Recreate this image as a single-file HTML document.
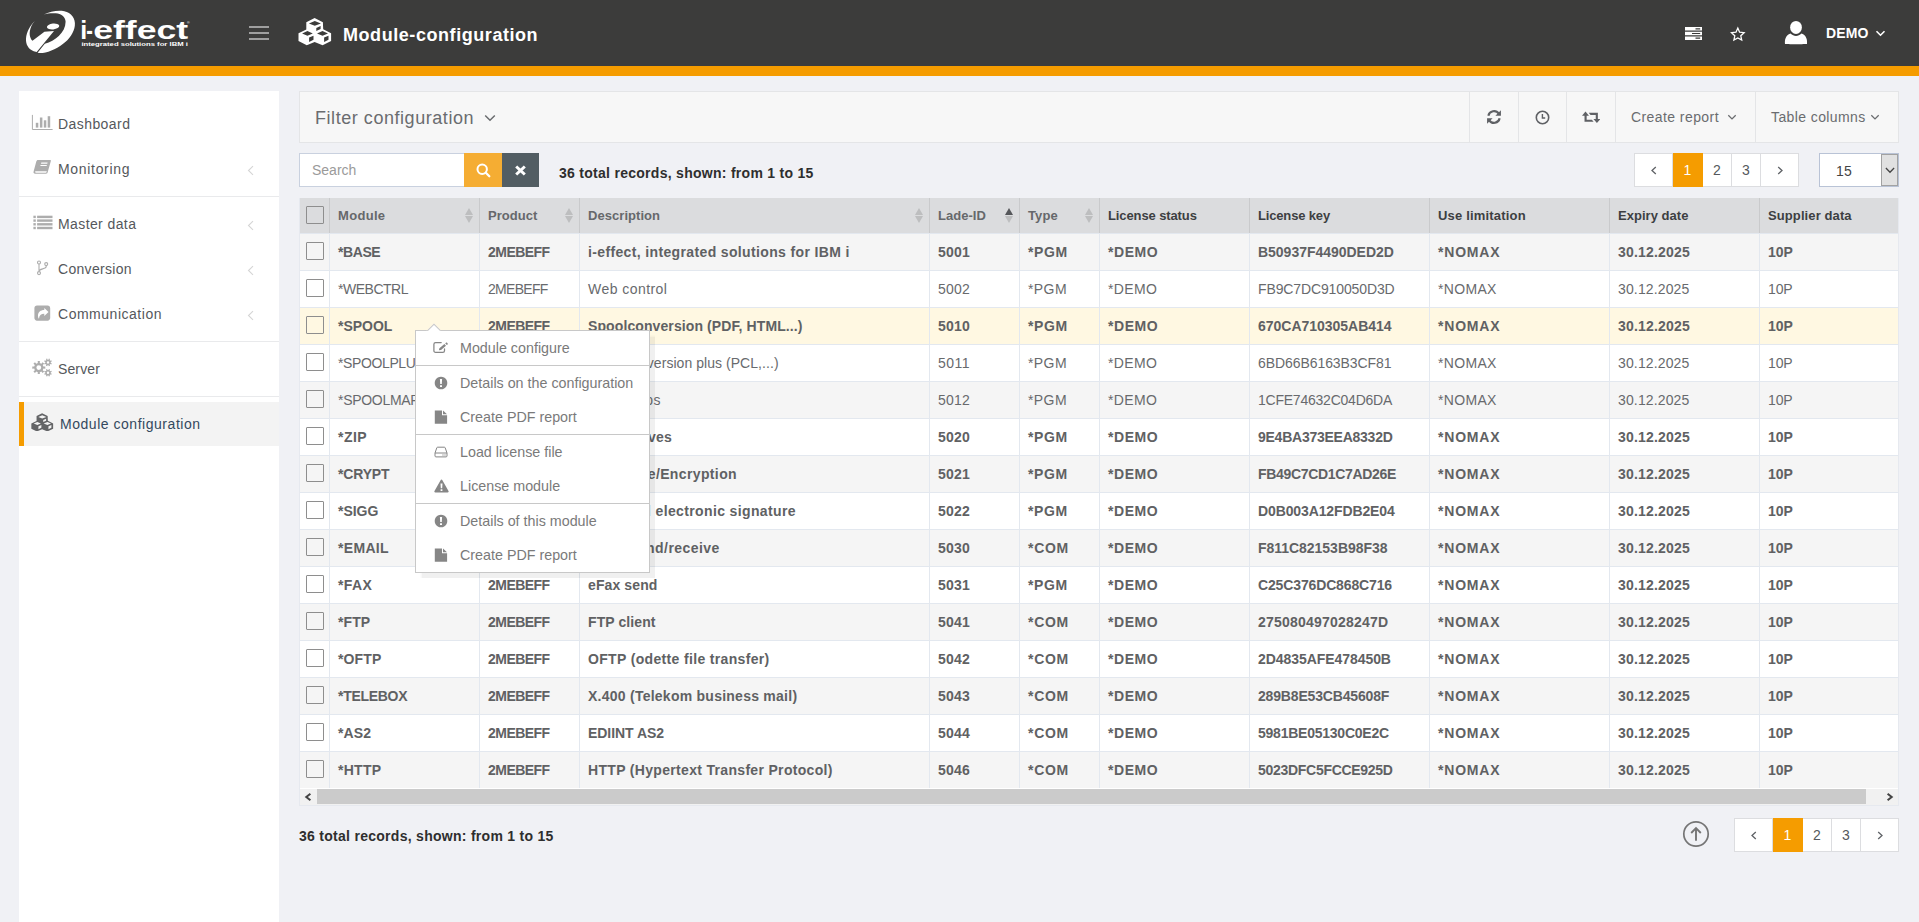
<!DOCTYPE html>
<html lang="en">
<head>
<meta charset="utf-8">
<title>Module-configuration</title>
<style>
*{box-sizing:border-box}
html,body{margin:0;padding:0}
body{width:1919px;height:922px;overflow:hidden;position:relative;background:#f0f1f5;font-family:"Liberation Sans",Arial,sans-serif;font-size:14px;color:#55585c}
.os{white-space:nowrap;display:inline-block}
#hdr{position:absolute;left:0;top:0;width:1919px;height:66px;background:#3c3c3b}
#bar{position:absolute;left:0;top:66px;width:1919px;height:10px;background:#f59c00}
#logo{position:absolute;left:0;top:0}
#title{position:absolute;left:343px;top:23px;font-size:18px;line-height:24px;font-weight:700;color:#fff}
#user{position:absolute;left:1826px;top:23px;font-size:14px;line-height:20px;font-weight:700;color:#fff}
#side{position:absolute;left:19px;top:91px;width:260px;height:831px;background:#fff;padding-top:10px}
#side .it{position:relative;height:45px;line-height:45px;font-size:14px;color:#55585c}
#side .it .lb{position:absolute;left:39px;top:1px}
#side .it svg.ic{position:absolute}
#side .it svg.ch{position:absolute;left:228px;top:19px}
#side .sep{height:1px;background:#e9eaec;margin:5px 0 4px 0}
#side .it.act{background:#f3f3f3;border-left:5px solid #f59c00;color:#34495e;top:1px;height:44px}
#side .it.act .lb{left:36px;top:0}
#filt{position:absolute;left:299px;top:91px;width:1600px;height:52px;background:#f7f7f7;border:1px solid #e4e5e7}
#filt .ft{position:absolute;left:15px;top:13px;font-size:18px;line-height:26px;color:#6a6c6f}
#filt .fch{position:absolute;left:184.3px;top:22px}
#filt .tb{position:absolute;top:0;height:50px;border-left:1px solid #e4e5e7;color:#6a6c6f;font-size:14px;line-height:50px}
#filt .tb .tl{position:absolute;top:0}
#filt .tb .tch{position:absolute;top:22.3px}
#srch{position:absolute;left:299px;top:153px;width:166px;height:34px;background:#fff;border:1px solid #c9d1df;font-size:14px;line-height:32px;padding-left:12px;color:#9a9a9a}
#sb1{position:absolute;left:464px;top:153px;width:38px;height:34px;background:#f5ad33}
#sb2{position:absolute;left:502px;top:153px;width:37px;height:34px;background:#525d63}
#rec1{position:absolute;left:559px;top:163px;font-size:14px;line-height:20px;color:#2e2e2e;font-weight:700}
#rec2{position:absolute;left:299px;top:826px;font-size:14px;line-height:20px;color:#2e2e2e;font-weight:700}
.pg{position:absolute;height:34px;display:flex;border:1px solid #dcdde0;background:#fff}
.pg .p{height:32px;line-height:32px;text-align:center;font-size:14px;color:#55585c;border-right:1px solid #dcdde0;display:flex;align-items:center;justify-content:center}
.pg .p:last-child{border-right:0}
.pg .p.on{background:#f59c00;color:#fff;margin:-1px 0;height:34px;border-right-color:#f59c00}
#sel{position:absolute;left:1819px;top:153px;width:80px;height:34px;background:#fff;border:1px solid #b9c3d6;font-size:14px;line-height:34px;color:#444;padding-left:16px}
#sel .arr{position:absolute;right:0;top:0;width:17px;height:32px;background:#e1e1e1;border:1px solid #a2a2a2;display:flex;align-items:center;justify-content:center}
#tw{position:absolute;left:299px;top:198px;width:1600px;height:591px;overflow:hidden;background:#fff;border-left:1px solid #e6e9ef;border-right:1px solid #e6e9ef}
#tbl{border-collapse:separate;border-spacing:0;table-layout:fixed;width:1610px;font-size:14px}
#tbl th{height:35px;background:#dbdcde;text-align:left;font-weight:700;padding:0 0 0 8px;border-right:1px solid #c9cacc;position:relative;color:#3d3f42;font-size:13px}
#tbl th.so{color:#66686b}
#tbl td{height:37px;padding:0 0 0 8px;border-right:1px solid #e3e8ef;border-top:1px solid #e3e8ef;color:#686a6d;background:#fff}
#tbl tr.b td{font-weight:700;color:#606163}
#tbl tr.odd td{background:#f5f5f5}
#tbl tr.hl td{background:#fff8e2}
#tbl .ck{padding:0}
#tbl .ck i{display:block;width:18px;height:18px;border:1px solid #8e8e8e;background:#fff;margin-left:6px;border-radius:1px;position:relative;top:-1px}
#tbl tr.odd .ck i{background:#f5f5f5}
#tbl tr.hl .ck i{background:#fff8e2}
#tbl th.ck i{background:#dbdcde}
#tbl .si{position:absolute;right:6px;top:10px;width:8px;height:16px}
#tbl .si:before{content:"";position:absolute;left:0;top:0;border:4px solid transparent;border-top-width:0;border-bottom:7px solid #bdbebf}
#tbl .si:after{content:"";position:absolute;left:0;top:8px;border:4px solid transparent;border-bottom-width:0;border-top:7px solid #bdbebf}
#tbl .si.up:before{border-bottom-color:#55575a}
#hs{position:absolute;left:299px;top:789px;width:1600px;height:17px;background:#f1f1f1;border:1px solid #e6e9ef;border-top:0}
#hs .th{position:absolute;left:17px;top:0;width:1549px;height:15px;background:#cbcbcb}
#upc{position:absolute;left:1681.3px;top:819.2px}
#cm{position:absolute;left:415px;top:330px;width:235px;background:#fff;border:1px solid #c8c8c8;box-shadow:4.5px 4.5px 1px rgba(0,0,0,.06);font-family:"Liberation Sans",Arial,sans-serif;font-size:14.3px;color:#7a7a7a}
#cm .mi{height:34px;line-height:34px;position:relative}
#cm .mi span{position:absolute;left:44px;top:0;white-space:nowrap}
#cm .mi svg{position:absolute;left:17px;top:10px}
#cm .ms{height:1px;background:#c8c8c8}
#cm .ar{position:absolute;left:10px;top:-8px;width:15px;height:8px;overflow:hidden}
#cm .ar:before{content:"";position:absolute;left:2px;top:3px;width:10px;height:10px;background:#fff;border:1px solid #c8c8c8;transform:rotate(45deg)}
</style>
</head>
<body>
<div id="hdr">
<svg id="logo" width="1919" height="66" viewBox="0 0 1919 66">
<g fill="#fff">
<path d="M43.9,14.5 C49,11.5 56,10.3 61.7,10.7 C69,11.3 74.5,16 74.9,22.9 C75.3,30 71,37 65.3,42 C59,47.5 50,52 42.7,53 C40.5,53.2 39,53 37.6,52.7 L44.8,43.8 C50,42.5 55,39.5 58.8,36 C63,32 65.5,27 65.6,21.7 C65.6,17 61,13.5 55.8,13.3 C51,13 47,13.5 43.9,14.5 Z"/>
<path d="M34.9,21.1 C30.5,25 26.5,32 26,38.4 C25.6,44.5 28.5,49 33.7,51.2 L36.7,52.1 L54,30.9 L44.4,31.8 L32.5,40.8 C29.5,38 29,33 30.5,28.5 C31.5,25.5 33,23 34.9,21.1 Z"/>
<ellipse cx="53.1" cy="26.5" rx="6.2" ry="2.9" transform="rotate(-6 53.1 26.5)"/>
<text y="38.8" font-family="Liberation Sans, Arial, sans-serif" font-weight="700" font-size="25"><tspan x="80.2">i</tspan><tspan x="86.3" textLength="6.6" lengthAdjust="spacingAndGlyphs">-</tspan><tspan x="93.2" textLength="95" lengthAdjust="spacingAndGlyphs">effect</tspan></text>
<text x="81.4" y="46" font-family="Liberation Sans, Arial, sans-serif" font-weight="700" font-size="5.6" textLength="106.5" lengthAdjust="spacingAndGlyphs">integrated solutions for IBM i</text>
<text x="187" y="23.5" font-family="Liberation Sans, Arial, sans-serif" font-size="3.5">®</text>
</g>
<path fill="#fff" fill-rule="evenodd" d="M314.6,18.1 L322.9,22.2 L323.2,29.3 L331.1,33.3 L331.1,41 L322.6,45.2 L314.6,42 L306.8,45.2 L298.5,41.1 L298.5,33.3 L306.3,29.4 L306.3,22.2 Z M314.8,20.9 L320.9,23.4 L314.8,25.8 L308.9,23.4 Z M316.3,28.1 L320.6,26.1 L320.6,29.1 L316.3,30.9 Z M307.4,31.1 L312.8,33.4 L307.4,35.7 L302.1,33.4 Z M309.1,37.6 L313.5,35.7 L313.5,39.8 L309.1,41.9 Z M322.5,31.1 L328,33.4 L322.5,35.7 L317,33.4 Z M324.1,37.6 L328.5,35.7 L328.5,39.8 L324.1,41.9 Z"/>
<g fill="#fff"><path fill-rule="evenodd" d="M1685,27 h17 v3.6 h-17 Z M1695.5,28.2 v1.2 h4.7 v-1.2 Z"/><path fill-rule="evenodd" d="M1685,31.7 h17 v3.6 h-17 Z M1692,32.9 v1.2 h8.2 v-1.2 Z"/><path fill-rule="evenodd" d="M1685,36.4 h17 v3.6 h-17 Z M1695.5,37.6 v1.2 h4.7 v-1.2 Z"/></g>
<path d="M1737.8,28.1 L1739.6,32.2 L1744.1,32.7 L1740.8,35.8 L1741.7,40.1 L1737.8,38.0 L1733.9,40.1 L1734.8,35.8 L1731.5,32.7 L1736.0,32.2 Z" fill="none" stroke="#fff" stroke-width="1.3" stroke-linejoin="miter"/>
<g fill="#fff"><ellipse cx="1796" cy="27.4" rx="5.9" ry="6.5"/><path d="M1785,44 C1784.6,40 1785.5,35.5 1790.5,33.6 C1792.2,35.2 1794,35.9 1796,35.9 C1798,35.9 1799.8,35.2 1801.5,33.6 C1806.5,35.5 1807.4,40 1807,44 C1806.6,44.2 1785.4,44.2 1785,44 Z"/></g>
<path d="M1876.5,31.2 L1880.5,35.2 L1884.5,31.2" fill="none" stroke="#fff" stroke-width="1.6"/>
<g fill="#b9b9b8"><rect x="249" y="26.2" width="20" height="1.6"/><rect x="249" y="32.2" width="20" height="1.6"/><rect x="249" y="38.2" width="20" height="1.6"/></g>
</svg>
<div id="title"><span class="os b" style="letter-spacing:0.56px">Module-configuration</span></div>
<div id="user"><span class="os b" style="letter-spacing:0.14px">DEMO</span></div>
</div>
<div id="bar"></div>

<div id="side">
<div class="it"><svg class="ic" style="left:12px;top:13px" width="22" height="17" viewBox="31 114 22 17"><path d="M32.4,114.9 V129.5 H52.6" fill="none" stroke="#adadad" stroke-width="1"/><g fill="#adadad"><rect x="35.8" y="122.8" width="2.5" height="4.8"/><rect x="39.9" y="117.5" width="2.5" height="10.1"/><rect x="43.8" y="120.3" width="2.5" height="7.3"/><rect x="47.7" y="116.2" width="2.5" height="11.4"/></g></svg><span class="lb os" style="letter-spacing:0.43px">Dashboard</span></div>
<div class="it"><svg class="ic" style="left:14px;top:13px" width="19" height="16" viewBox="33 159 19 16"><path fill="#adadad" fill-rule="evenodd" d="M37.9,160 H50 C50.8,160 51,160.5 50.8,161.2 L47.6,172.6 C47.4,173.4 46.8,173.8 46,173.8 H35.2 C33.8,173.8 33.2,172.9 33.6,171.6 L36.3,161.6 C36.6,160.6 37.1,160 37.9,160 Z M41.3,162.6 L41,163.7 H47.3 L47.6,162.6 Z M40.6,165 L40.3,166.1 H46.6 L46.9,165 Z M35.3,171.3 C34.9,172.3 35.2,172.7 36,172.7 H45.7 C46.2,172.7 46.5,172.4 46.6,171.9 L46.8,171.3 Z"/></svg><span class="lb os" style="letter-spacing:0.68px">Monitoring</span><svg class="ch" width="8" height="11" viewBox="0 0 8 11"><path d="M6 1.2 L1.5 5.5 L6 9.8" fill="none" stroke="#d5d5d5" stroke-width="1.1"/></svg></div>
<div class="sep"></div>
<div class="it"><svg class="ic" style="left:13.5px;top:13.5px" width="20" height="16" viewBox="32.5 214.5 20 16"><g fill="#adadad"><rect x="32.9" y="215.2" width="2.4" height="2.4"/><rect x="36.6" y="215.2" width="15.4" height="2.4"/><rect x="32.9" y="218.9" width="2.4" height="2.4"/><rect x="36.6" y="218.9" width="15.4" height="2.4"/><rect x="32.9" y="222.6" width="2.4" height="2.4"/><rect x="36.6" y="222.6" width="15.4" height="2.4"/><rect x="32.9" y="226.3" width="2.4" height="2.4"/><rect x="36.6" y="226.3" width="15.4" height="2.4"/></g></svg><span class="lb os" style="letter-spacing:0.40px">Master data</span><svg class="ch" width="8" height="11" viewBox="0 0 8 11"><path d="M6 1.2 L1.5 5.5 L6 9.8" fill="none" stroke="#d5d5d5" stroke-width="1.1"/></svg></div>
<div class="it"><svg class="ic" style="left:17px;top:13.5px" width="13" height="17" viewBox="36 259.5 13 17"><g fill="none" stroke="#adadad" stroke-width="1.1"><circle cx="39" cy="262" r="1.5"/><circle cx="39" cy="272.6" r="1.5"/><circle cx="46.2" cy="263.6" r="1.5"/><path d="M39,263.5 V271.1 M46.2,265.1 V266 C46.2,269 39,267.8 39,271"/></g></svg><span class="lb os" style="letter-spacing:0.30px">Conversion</span><svg class="ch" width="8" height="11" viewBox="0 0 8 11"><path d="M6 1.2 L1.5 5.5 L6 9.8" fill="none" stroke="#d5d5d5" stroke-width="1.1"/></svg></div>
<div class="it"><svg class="ic" style="left:15px;top:13.5px" width="17" height="16" viewBox="34 304.5 17 16"><path fill="#adadad" fill-rule="evenodd" d="M37,305.1 H47.6 C49.1,305.1 50.2,306.2 50.2,307.7 V317.6 C50.2,319.1 49.1,320.2 47.6,320.2 H37 C35.5,320.2 34.4,319.1 34.4,317.6 V307.7 C34.4,306.2 35.5,305.1 37,305.1 Z M44.3,307.4 V309.6 C40.5,309.7 38,311.6 38,315.2 C38,316.4 38.4,317.5 39,318.2 C39.2,315.1 40.9,313.4 44.3,313.3 V315.6 L48.5,311.5 Z"/></svg><span class="lb os" style="letter-spacing:0.52px">Communication</span><svg class="ch" width="8" height="11" viewBox="0 0 8 11"><path d="M6 1.2 L1.5 5.5 L6 9.8" fill="none" stroke="#d5d5d5" stroke-width="1.1"/></svg></div>
<div class="sep"></div>
<div class="it"><svg class="ic" style="left:13.3px;top:12px" width="21" height="19" viewBox="32.3 358 21 19"><path fill="#adadad" fill-rule="evenodd" d="M45.61,366.52 L45.61,368.68 L43.69,368.59 L43.05,370.15 L44.47,371.44 L42.94,372.97 L41.65,371.55 L40.09,372.19 L40.18,374.11 L38.02,374.11 L38.11,372.19 L36.55,371.55 L35.26,372.97 L33.73,371.44 L35.15,370.15 L34.51,368.59 L32.59,368.68 L32.59,366.52 L34.51,366.61 L35.15,365.05 L33.73,363.76 L35.26,362.23 L36.55,363.65 L38.11,363.01 L38.02,361.09 L40.18,361.09 L40.09,363.01 L41.65,363.65 L42.94,362.23 L44.47,363.76 L43.05,365.05 L43.69,366.61 Z M36.70,367.60 a2.4,2.4 0 1,0 4.8,0 a2.4,2.4 0 1,0 -4.8,0 Z"/><path fill="#adadad" fill-rule="evenodd" d="M52.10,363.28 L51.61,364.46 L50.60,363.99 L49.89,364.70 L50.36,365.71 L49.18,366.20 L48.80,365.15 L47.80,365.15 L47.42,366.20 L46.24,365.71 L46.71,364.70 L46.00,363.99 L44.99,364.46 L44.50,363.28 L45.55,362.90 L45.55,361.90 L44.50,361.52 L44.99,360.34 L46.00,360.81 L46.71,360.10 L46.24,359.09 L47.42,358.60 L47.80,359.65 L48.80,359.65 L49.18,358.60 L50.36,359.09 L49.89,360.10 L50.60,360.81 L51.61,360.34 L52.10,361.52 L51.05,361.90 L51.05,362.90 Z M47.10,362.40 a1.2,1.2 0 1,0 2.4,0 a1.2,1.2 0 1,0 -2.4,0 Z"/><path fill="#adadad" fill-rule="evenodd" d="M52.10,373.68 L51.61,374.86 L50.60,374.39 L49.89,375.10 L50.36,376.11 L49.18,376.60 L48.80,375.55 L47.80,375.55 L47.42,376.60 L46.24,376.11 L46.71,375.10 L46.00,374.39 L44.99,374.86 L44.50,373.68 L45.55,373.30 L45.55,372.30 L44.50,371.92 L44.99,370.74 L46.00,371.21 L46.71,370.50 L46.24,369.49 L47.42,369.00 L47.80,370.05 L48.80,370.05 L49.18,369.00 L50.36,369.49 L49.89,370.50 L50.60,371.21 L51.61,370.74 L52.10,371.92 L51.05,372.30 L51.05,373.30 Z M47.10,372.80 a1.2,1.2 0 1,0 2.4,0 a1.2,1.2 0 1,0 -2.4,0 Z"/></svg><span class="lb os" style="letter-spacing:0.12px">Server</span></div>
<div class="sep"></div>
<div class="it act"><svg class="ic" style="left:6.9px;top:10.6px" width="22.75" height="18.73" viewBox="298 17.6 34 28"><path fill="#636466" fill-rule="evenodd" d="M314.6,18.1 L322.9,22.2 L323.2,29.3 L331.1,33.3 L331.1,41 L322.6,45.2 L314.6,42 L306.8,45.2 L298.5,41.1 L298.5,33.3 L306.3,29.4 L306.3,22.2 Z M314.8,20.9 L320.9,23.4 L314.8,25.8 L308.9,23.4 Z M316.3,28.1 L320.6,26.1 L320.6,29.1 L316.3,30.9 Z M307.4,31.1 L312.8,33.4 L307.4,35.7 L302.1,33.4 Z M309.1,37.6 L313.5,35.7 L313.5,39.8 L309.1,41.9 Z M322.5,31.1 L328,33.4 L322.5,35.7 L317,33.4 Z M324.1,37.6 L328.5,35.7 L328.5,39.8 L324.1,41.9 Z"/></svg><span class="lb os" style="letter-spacing:0.53px">Module configuration</span></div>
</div>

<div id="filt">
<div class="ft"><span class="os" style="letter-spacing:0.55px">Filter configuration</span></div>
<svg class="fch" width="12" height="8" viewBox="0 0 12 8"><path d="M1.2 1.5 L6 6.2 L10.8 1.5" fill="none" stroke="#6a6c6f" stroke-width="1.5"/></svg>
<div class="tb" style="left:1169px;width:49px"><svg style="position:absolute;left:15.85px;top:16.9px" width="16" height="16" viewBox="0 0 15 15"><g fill="none" stroke="#5f6165" stroke-width="2"><path d="M2.2,6.3 A5.4,5.4 0 0 1 12,4.4"/><path d="M12.8,8.7 A5.4,5.4 0 0 1 3,10.6"/></g><path fill="#5f6165" d="M14,1.1 V6.3 H8.8 Z M1,13.9 V8.7 H6.2 Z"/></svg></div>
<div class="tb" style="left:1218px;width:48px"><svg style="position:absolute;left:16px;top:17.8px" width="15" height="15" viewBox="0 0 15 15"><circle cx="7.5" cy="7.5" r="6.2" fill="none" stroke="#5f6165" stroke-width="1.6"/><path d="M7.4,4 V8 H10.2" fill="none" stroke="#5f6165" stroke-width="1.4"/></svg></div>
<div class="tb" style="left:1266px;width:49px"><svg style="position:absolute;left:14.8px;top:19.15px" width="18.4" height="12.6" viewBox="0 0 19 13"><path fill="#5f6165" d="M3.6,0.6 L7.2,4.8 H4.8 V9 H10.2 L12,11.2 H2.6 V4.8 H0 Z M15.4,12.4 L11.8,8.2 H14.2 V4 H8.8 L7,1.8 H16.4 V8.2 H19 Z"/></svg></div>
<div class="tb" style="left:1315px;width:140px"><span class="os tl" style="left:15px;letter-spacing:0.42px">Create report</span>
<svg class="tch" style="left:110.5px" width="10" height="7" viewBox="0 0 10 7"><path d="M1.3 1.2 L5 4.9 L8.7 1.2" fill="none" stroke="#6a6c6f" stroke-width="1.3"/></svg></div>
<div class="tb" style="left:1455px;width:143px"><span class="os tl" style="left:15px;letter-spacing:0.40px">Table columns</span>
<svg class="tch" style="left:113.5px" width="10" height="7" viewBox="0 0 10 7"><path d="M1.3 1.2 L5 4.9 L8.7 1.2" fill="none" stroke="#6a6c6f" stroke-width="1.3"/></svg></div>
</div>

<div id="srch"><span class="os ph" style="letter-spacing:-0.01px">Search</span></div>
<div id="sb1"><svg style="position:absolute;left:12px;top:10.4px" width="15" height="15" viewBox="0 0 15 15"><circle cx="6.2" cy="6.2" r="4.7" fill="none" stroke="#fff" stroke-width="2"/><path d="M9.8,9.8 L13.3,13.3" stroke="#fff" stroke-width="2.3" stroke-linecap="round"/></svg></div>
<div id="sb2"><svg style="position:absolute;left:12.2px;top:11.8px" width="13" height="11" viewBox="0 0 13 11"><path d="M2.2,1.5 L10.8,9.5 M10.8,1.5 L2.2,9.5" stroke="#fff" stroke-width="3"/></svg></div>
<div id="rec1"><span class="os b" style="letter-spacing:0.28px">36 total records, shown: from 1 to 15</span></div>

<div class="pg" style="left:1634px;top:153px">
<div class="p" style="width:38px"><svg width="8" height="12" viewBox="0 0 8 12"><path d="M5.8 3 L2 6.5 L5.8 10" fill="none" stroke="#5f6266" stroke-width="1.3"/></svg></div><div class="p on" style="width:30px"><span class="os" style="letter-spacing:0.21px">1</span></div><div class="p" style="width:29px"><span class="os" style="letter-spacing:0.21px">2</span></div><div class="p" style="width:29px"><span class="os" style="letter-spacing:0.21px">3</span></div><div class="p" style="width:37px"><svg width="8" height="12" viewBox="0 0 8 12"><path d="M2.2 3 L6 6.5 L2.2 10" fill="none" stroke="#5f6266" stroke-width="1.3"/></svg></div>
</div>
<div id="sel"><span class="os" style="letter-spacing:0.22px">15</span><div class="arr"><svg width="10" height="7" viewBox="0 0 10 7"><path d="M0.9 1 L5 5.3 L9.1 1" fill="none" stroke="#444" stroke-width="1.3"/></svg></div></div>

<div id="tw">
<table id="tbl">
<colgroup><col style="width:30px"><col style="width:150px"><col style="width:100px"><col style="width:350px"><col style="width:90px"><col style="width:80px"><col style="width:150px"><col style="width:180px"><col style="width:180px"><col style="width:150px"><col style="width:150px"></colgroup>
<thead><tr>
<th class="ck"><i></i></th>
<th class="so"><span class="os sb" style="letter-spacing:0.32px">Module</span><b class="si"></b></th>
<th class="so"><span class="os sb" style="letter-spacing:0.05px">Product</span><b class="si"></b></th>
<th class="so"><span class="os sb" style="letter-spacing:0.05px">Description</span><b class="si"></b></th>
<th class="so"><span class="os sb" style="letter-spacing:0.03px">Lade-ID</span><b class="si up"></b></th>
<th class="so"><span class="os sb" style="letter-spacing:0.14px">Type</span><b class="si"></b></th>
<th><span class="os sb" style="letter-spacing:-0.11px">License status</span></th>
<th><span class="os sb" style="letter-spacing:-0.16px">License key</span></th>
<th><span class="os sb" style="letter-spacing:0.18px">Use limitation</span></th>
<th><span class="os sb" style="letter-spacing:0.03px">Expiry date</span></th>
<th><span class="os sb" style="letter-spacing:0.10px">Supplier data</span></th>
</tr></thead>
<tbody>
<tr class="b odd"><td class="ck"><i></i></td><td><span class="os b" style="letter-spacing:-0.42px">*BASE</span></td><td><span class="os b" style="letter-spacing:-0.53px">2MEBEFF</span></td><td><span class="os b" style="letter-spacing:0.36px">i-effect, integrated solutions for IBM i</span></td><td><span class="os b" style="letter-spacing:0.20px">5001</span></td><td><span class="os b" style="letter-spacing:0.60px">*PGM</span></td><td><span class="os b" style="letter-spacing:0.54px">*DEMO</span></td><td><span class="os b" style="letter-spacing:-0.02px">B50937F4490DED2D</span></td><td><span class="os b" style="letter-spacing:0.80px">*NOMAX</span></td><td><span class="os b" style="letter-spacing:0.18px">30.12.2025</span></td><td><span class="os b" style="letter-spacing:-0.05px">10P</span></td></tr>
<tr class=""><td class="ck"><i></i></td><td><span class="os" style="letter-spacing:-0.48px">*WEBCTRL</span></td><td><span class="os" style="letter-spacing:-0.69px">2MEBEFF</span></td><td><span class="os" style="letter-spacing:0.45px">Web control</span></td><td><span class="os" style="letter-spacing:0.22px">5002</span></td><td><span class="os" style="letter-spacing:0.41px">*PGM</span></td><td><span class="os" style="letter-spacing:0.36px">*DEMO</span></td><td><span class="os" style="letter-spacing:-0.12px">FB9C7DC910050D3D</span></td><td><span class="os" style="letter-spacing:0.33px">*NOMAX</span></td><td><span class="os" style="letter-spacing:0.14px">30.12.2025</span></td><td><span class="os" style="letter-spacing:-0.16px">10P</span></td></tr>
<tr class="b odd hl"><td class="ck"><i></i></td><td><span class="os b" style="letter-spacing:-0.02px">*SPOOL</span></td><td><span class="os b" style="letter-spacing:-0.53px">2MEBEFF</span></td><td><span class="os b" style="letter-spacing:0.10px">Spoolconversion (PDF, HTML...)</span></td><td><span class="os b" style="letter-spacing:0.20px">5010</span></td><td><span class="os b" style="letter-spacing:0.60px">*PGM</span></td><td><span class="os b" style="letter-spacing:0.54px">*DEMO</span></td><td><span class="os b" style="letter-spacing:-0.02px">670CA710305AB414</span></td><td><span class="os b" style="letter-spacing:0.80px">*NOMAX</span></td><td><span class="os b" style="letter-spacing:0.18px">30.12.2025</span></td><td><span class="os b" style="letter-spacing:-0.05px">10P</span></td></tr>
<tr class=""><td class="ck"><i></i></td><td><span class="os" style="letter-spacing:-0.38px">*SPOOLPLUS</span></td><td><span class="os" style="letter-spacing:-0.69px">2MEBEFF</span></td><td><span class="os" style="letter-spacing:0.05px">Spoolconversion plus (PCL,...)</span></td><td><span class="os" style="letter-spacing:0.48px">5011</span></td><td><span class="os" style="letter-spacing:0.41px">*PGM</span></td><td><span class="os" style="letter-spacing:0.36px">*DEMO</span></td><td><span class="os" style="letter-spacing:-0.07px">6BD66B6163B3CF81</span></td><td><span class="os" style="letter-spacing:0.33px">*NOMAX</span></td><td><span class="os" style="letter-spacing:0.14px">30.12.2025</span></td><td><span class="os" style="letter-spacing:-0.16px">10P</span></td></tr>
<tr class="odd"><td class="ck"><i></i></td><td><span class="os" style="letter-spacing:-0.29px">*SPOOLMAPS</span></td><td><span class="os" style="letter-spacing:-0.69px">2MEBEFF</span></td><td><span class="os" style="letter-spacing:0.30px">Spoolmaps</span></td><td><span class="os" style="letter-spacing:0.22px">5012</span></td><td><span class="os" style="letter-spacing:0.41px">*PGM</span></td><td><span class="os" style="letter-spacing:0.36px">*DEMO</span></td><td><span class="os" style="letter-spacing:-0.23px">1CFE74632C04D6DA</span></td><td><span class="os" style="letter-spacing:0.33px">*NOMAX</span></td><td><span class="os" style="letter-spacing:0.14px">30.12.2025</span></td><td><span class="os" style="letter-spacing:-0.16px">10P</span></td></tr>
<tr class="b"><td class="ck"><i></i></td><td><span class="os b" style="letter-spacing:0.48px">*ZIP</span></td><td><span class="os b" style="letter-spacing:-0.53px">2MEBEFF</span></td><td><span class="os b" style="letter-spacing:0.13px">ZIP archives</span></td><td><span class="os b" style="letter-spacing:0.20px">5020</span></td><td><span class="os b" style="letter-spacing:0.60px">*PGM</span></td><td><span class="os b" style="letter-spacing:0.54px">*DEMO</span></td><td><span class="os b" style="letter-spacing:-0.25px">9E4BA373EEA8332D</span></td><td><span class="os b" style="letter-spacing:0.80px">*NOMAX</span></td><td><span class="os b" style="letter-spacing:0.18px">30.12.2025</span></td><td><span class="os b" style="letter-spacing:-0.05px">10P</span></td></tr>
<tr class="b odd"><td class="ck"><i></i></td><td><span class="os b" style="letter-spacing:-0.16px">*CRYPT</span></td><td><span class="os b" style="letter-spacing:-0.53px">2MEBEFF</span></td><td><span class="os b" style="letter-spacing:0.37px">Signature/Encryption</span></td><td><span class="os b" style="letter-spacing:0.20px">5021</span></td><td><span class="os b" style="letter-spacing:0.60px">*PGM</span></td><td><span class="os b" style="letter-spacing:0.54px">*DEMO</span></td><td><span class="os b" style="letter-spacing:-0.32px">FB49C7CD1C7AD26E</span></td><td><span class="os b" style="letter-spacing:0.80px">*NOMAX</span></td><td><span class="os b" style="letter-spacing:0.18px">30.12.2025</span></td><td><span class="os b" style="letter-spacing:-0.05px">10P</span></td></tr>
<tr class="b"><td class="ck"><i></i></td><td><span class="os b" style="letter-spacing:-0.04px">*SIGG</span></td><td><span class="os b" style="letter-spacing:-0.53px">2MEBEFF</span></td><td><span class="os b" style="letter-spacing:0.37px">Qualified electronic signature</span></td><td><span class="os b" style="letter-spacing:0.20px">5022</span></td><td><span class="os b" style="letter-spacing:0.60px">*PGM</span></td><td><span class="os b" style="letter-spacing:0.54px">*DEMO</span></td><td><span class="os b" style="letter-spacing:-0.12px">D0B003A12FDB2E04</span></td><td><span class="os b" style="letter-spacing:0.80px">*NOMAX</span></td><td><span class="os b" style="letter-spacing:0.18px">30.12.2025</span></td><td><span class="os b" style="letter-spacing:-0.05px">10P</span></td></tr>
<tr class="b odd"><td class="ck"><i></i></td><td><span class="os b" style="letter-spacing:0.31px">*EMAIL</span></td><td><span class="os b" style="letter-spacing:-0.53px">2MEBEFF</span></td><td><span class="os b" style="letter-spacing:0.45px">eMail send/receive</span></td><td><span class="os b" style="letter-spacing:0.20px">5030</span></td><td><span class="os b" style="letter-spacing:0.69px">*COM</span></td><td><span class="os b" style="letter-spacing:0.54px">*DEMO</span></td><td><span class="os b" style="letter-spacing:-0.03px">F811C82153B98F38</span></td><td><span class="os b" style="letter-spacing:0.80px">*NOMAX</span></td><td><span class="os b" style="letter-spacing:0.18px">30.12.2025</span></td><td><span class="os b" style="letter-spacing:-0.05px">10P</span></td></tr>
<tr class="b"><td class="ck"><i></i></td><td><span class="os b" style="letter-spacing:0.41px">*FAX</span></td><td><span class="os b" style="letter-spacing:-0.53px">2MEBEFF</span></td><td><span class="os b" style="letter-spacing:0.11px">eFax send</span></td><td><span class="os b" style="letter-spacing:0.20px">5031</span></td><td><span class="os b" style="letter-spacing:0.60px">*PGM</span></td><td><span class="os b" style="letter-spacing:0.54px">*DEMO</span></td><td><span class="os b" style="letter-spacing:-0.14px">C25C376DC868C716</span></td><td><span class="os b" style="letter-spacing:0.80px">*NOMAX</span></td><td><span class="os b" style="letter-spacing:0.18px">30.12.2025</span></td><td><span class="os b" style="letter-spacing:-0.05px">10P</span></td></tr>
<tr class="b odd"><td class="ck"><i></i></td><td><span class="os b" style="letter-spacing:0.08px">*FTP</span></td><td><span class="os b" style="letter-spacing:-0.53px">2MEBEFF</span></td><td><span class="os b" style="letter-spacing:0.09px">FTP client</span></td><td><span class="os b" style="letter-spacing:0.20px">5041</span></td><td><span class="os b" style="letter-spacing:0.69px">*COM</span></td><td><span class="os b" style="letter-spacing:0.54px">*DEMO</span></td><td><span class="os b" style="letter-spacing:0.21px">275080497028247D</span></td><td><span class="os b" style="letter-spacing:0.80px">*NOMAX</span></td><td><span class="os b" style="letter-spacing:0.18px">30.12.2025</span></td><td><span class="os b" style="letter-spacing:-0.05px">10P</span></td></tr>
<tr class="b"><td class="ck"><i></i></td><td><span class="os b" style="letter-spacing:0.11px">*OFTP</span></td><td><span class="os b" style="letter-spacing:-0.53px">2MEBEFF</span></td><td><span class="os b" style="letter-spacing:0.34px">OFTP (odette file transfer)</span></td><td><span class="os b" style="letter-spacing:0.20px">5042</span></td><td><span class="os b" style="letter-spacing:0.69px">*COM</span></td><td><span class="os b" style="letter-spacing:0.54px">*DEMO</span></td><td><span class="os b" style="letter-spacing:-0.06px">2D4835AFE478450B</span></td><td><span class="os b" style="letter-spacing:0.80px">*NOMAX</span></td><td><span class="os b" style="letter-spacing:0.18px">30.12.2025</span></td><td><span class="os b" style="letter-spacing:-0.05px">10P</span></td></tr>
<tr class="b odd"><td class="ck"><i></i></td><td><span class="os b" style="letter-spacing:-0.30px">*TELEBOX</span></td><td><span class="os b" style="letter-spacing:-0.53px">2MEBEFF</span></td><td><span class="os b" style="letter-spacing:0.25px">X.400 (Telekom business mail)</span></td><td><span class="os b" style="letter-spacing:0.20px">5043</span></td><td><span class="os b" style="letter-spacing:0.69px">*COM</span></td><td><span class="os b" style="letter-spacing:0.54px">*DEMO</span></td><td><span class="os b" style="letter-spacing:-0.17px">289B8E53CB45608F</span></td><td><span class="os b" style="letter-spacing:0.80px">*NOMAX</span></td><td><span class="os b" style="letter-spacing:0.18px">30.12.2025</span></td><td><span class="os b" style="letter-spacing:-0.05px">10P</span></td></tr>
<tr class="b"><td class="ck"><i></i></td><td><span class="os b" style="letter-spacing:0.08px">*AS2</span></td><td><span class="os b" style="letter-spacing:-0.53px">2MEBEFF</span></td><td><span class="os b" style="letter-spacing:-0.05px">EDIINT AS2</span></td><td><span class="os b" style="letter-spacing:0.20px">5044</span></td><td><span class="os b" style="letter-spacing:0.69px">*COM</span></td><td><span class="os b" style="letter-spacing:0.54px">*DEMO</span></td><td><span class="os b" style="letter-spacing:-0.24px">5981BE05130C0E2C</span></td><td><span class="os b" style="letter-spacing:0.80px">*NOMAX</span></td><td><span class="os b" style="letter-spacing:0.18px">30.12.2025</span></td><td><span class="os b" style="letter-spacing:-0.05px">10P</span></td></tr>
<tr class="b odd"><td class="ck"><i></i></td><td><span class="os b" style="letter-spacing:0.27px">*HTTP</span></td><td><span class="os b" style="letter-spacing:-0.53px">2MEBEFF</span></td><td><span class="os b" style="letter-spacing:0.32px">HTTP (Hypertext Transfer Protocol)</span></td><td><span class="os b" style="letter-spacing:0.20px">5046</span></td><td><span class="os b" style="letter-spacing:0.69px">*COM</span></td><td><span class="os b" style="letter-spacing:0.54px">*DEMO</span></td><td><span class="os b" style="letter-spacing:-0.29px">5023DFC5FCCE925D</span></td><td><span class="os b" style="letter-spacing:0.80px">*NOMAX</span></td><td><span class="os b" style="letter-spacing:0.18px">30.12.2025</span></td><td><span class="os b" style="letter-spacing:-0.05px">10P</span></td></tr>
</tbody>
</table>
</div>
<div id="hs"><div class="th"></div>
<svg style="position:absolute;left:4px;top:2.5px" width="8" height="10" viewBox="0 0 8 10"><path d="M6.4 1.8 L2.3 5 L6.4 8.2" fill="none" stroke="#444" stroke-width="2"/></svg>
<svg style="position:absolute;right:4.5px;top:2.5px" width="8" height="10" viewBox="0 0 8 10"><path d="M1.6 1.8 L5.7 5 L1.6 8.2" fill="none" stroke="#444" stroke-width="2"/></svg>
</div>
<div id="rec2"><span class="os b" style="letter-spacing:0.28px">36 total records, shown: from 1 to 15</span></div>
<svg id="upc" width="30" height="30" viewBox="0 0 30 30"><circle cx="15" cy="15" r="12.2" fill="none" stroke="#757575" stroke-width="1.7"/><path d="M15 21.8 V9.8 M10.2 14 L15 9.2 L19.8 14" fill="none" stroke="#757575" stroke-width="1.9"/></svg>
<div class="pg" style="left:1734px;top:818px">
<div class="p" style="width:38px"><svg width="8" height="12" viewBox="0 0 8 12"><path d="M5.8 3 L2 6.5 L5.8 10" fill="none" stroke="#5f6266" stroke-width="1.3"/></svg></div><div class="p on" style="width:30px"><span class="os" style="letter-spacing:0.21px">1</span></div><div class="p" style="width:29px"><span class="os" style="letter-spacing:0.21px">2</span></div><div class="p" style="width:29px"><span class="os" style="letter-spacing:0.21px">3</span></div><div class="p" style="width:37px"><svg width="8" height="12" viewBox="0 0 8 12"><path d="M2.2 3 L6 6.5 L2.2 10" fill="none" stroke="#5f6266" stroke-width="1.3"/></svg></div>
</div>

<div id="cm">
<div class="ar"></div>
<div class="mi"><svg width="16" height="14" viewBox="0 0 16 14"><path d="M11.5,7.8 V9.7 C11.5,10.7 10.8,11.4 9.8,11.4 H2.6 C1.6,11.4 0.9,10.7 0.9,9.7 V3.3 C0.9,2.3 1.6,1.6 2.6,1.6 H8.2" fill="none" stroke="#868686" stroke-width="1.25" stroke-linecap="round"/><path fill="#868686" d="M6.4,7.2 L11.4,2.9 L13,4.7 L8,9 L5.9,9.2 Z M12.2,2.3 L13,1.7 C13.3,1.5 13.8,1.5 14.1,1.8 L14.7,2.5 C14.9,2.8 14.9,3.3 14.6,3.5 L13.8,4.1 Z"/></svg><span>Module configure</span></div>
<div class="ms"></div>
<div class="mi"><svg style="left:18px" width="14" height="14" viewBox="0 0 14 14"><path fill="#868686" fill-rule="evenodd" d="M7,0.7 a6.3,6.3 0 1,0 0.001,0 Z M5.9,3 H8.1 L7.8,8 H6.2 Z M6,9.2 H8 V11.1 H6 Z"/></svg><span>Details on the configuration</span></div>
<div class="mi"><svg style="left:18px" width="14" height="14" viewBox="0 0 14 14"><path fill="#868686" d="M0.8,0.4 H8 V5.2 H13.1 V13.8 H0.8 Z M9,0.5 L13,4.2 H9 Z"/></svg><span>Create PDF report</span></div>
<div class="ms"></div>
<div class="mi"><svg style="left:17.8px" width="14" height="14" viewBox="0 0 14 14"><path fill="none" stroke="#868686" stroke-width="1" d="M1,8 L2.8,2.8 C2.9,2.4 3.2,2.2 3.6,2.2 H10.4 C10.8,2.2 11.1,2.4 11.2,2.8 L13,8 V11 C13,11.5 12.6,11.9 12.1,11.9 H1.9 C1.4,11.9 1,11.5 1,11 Z M1,8 H13"/><path fill="#868686" d="M8.4,9.5 h1.2 v1.1 h-1.2 Z M10.4,9.5 h1.2 v1.1 h-1.2 Z"/></svg><span>Load license file</span></div>
<div class="mi"><svg style="left:17.5px" width="15" height="14" viewBox="0 0 15 14"><path fill="#868686" fill-rule="evenodd" d="M7.5,0.6 C7.9,0.6 8.2,0.8 8.4,1.2 L14.5,12 C14.9,12.8 14.5,13.4 13.7,13.4 H1.3 C0.5,13.4 0.1,12.8 0.5,12 L6.6,1.2 C6.8,0.8 7.1,0.6 7.5,0.6 Z M6.5,4.6 L6.8,9.2 H8.2 L8.5,4.6 Z M6.6,10.2 V11.9 H8.4 V10.2 Z"/></svg><span>License module</span></div>
<div class="ms"></div>
<div class="mi"><svg style="left:18px" width="14" height="14" viewBox="0 0 14 14"><path fill="#868686" fill-rule="evenodd" d="M7,0.7 a6.3,6.3 0 1,0 0.001,0 Z M5.9,3 H8.1 L7.8,8 H6.2 Z M6,9.2 H8 V11.1 H6 Z"/></svg><span>Details of this module</span></div>
<div class="mi"><svg style="left:18px" width="14" height="14" viewBox="0 0 14 14"><path fill="#868686" d="M0.8,0.4 H8 V5.2 H13.1 V13.8 H0.8 Z M9,0.5 L13,4.2 H9 Z"/></svg><span>Create PDF report</span></div>
</div>

</body>
</html>
